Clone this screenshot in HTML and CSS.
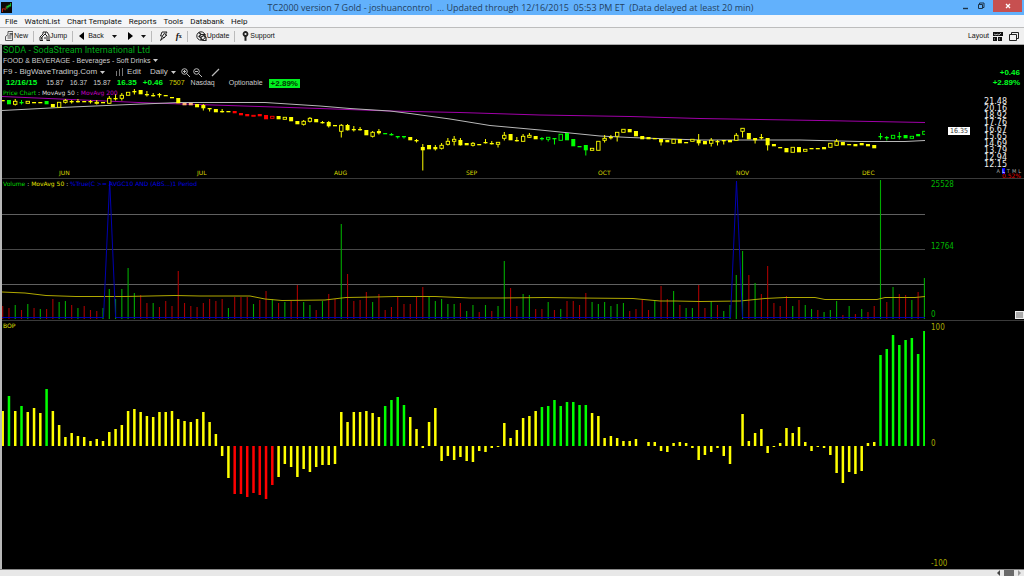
FILE: index.html
```html
<!DOCTYPE html>
<html lang="en">
<head>
<meta charset="utf-8">
<title>TC2000 version 7 Gold</title>
<link rel="stylesheet" href="styles.css">
</head>
<body>
<div class="app">
  <header class="titlebar">
    <svg class="logo" viewBox="0 0 12 12" aria-hidden="true"><rect width="12" height="12" fill="#0b0806"/><path d="M1 7h3v1H2v3H1zM4 7h1V5h1v2H5v2H4z" fill="#e02818"/><path d="M6 4h2V3h2V1h1v4H9v1H7v2H6z" fill="#18c030"/></svg>
    <h1 class="title">TC2000 version 7 Gold - joshuancontrol&nbsp; ... Updated through 12/16/2015&nbsp; 05:53 PM ET&nbsp; (Data delayed at least 20 min)</h1>
    <div class="window-buttons">
      <button class="win" aria-label="Minimize"><svg viewBox="0 0 8 8"><path d="M2 6.5h5" stroke="#1c3348" stroke-width="1.4"/></svg></button>
      <button class="win" aria-label="Restore"><svg viewBox="0 0 8 8" fill="none" stroke="#1c3348"><path d="M1.5 2.5h4v4h-4zM2.5 2V1H7v4.500H6"/></svg></button>
      <button class="win close" aria-label="Close"><svg viewBox="0 0 8 8"><path d="M2 2l4 4M6 2L2 6" stroke="#fff" stroke-width="1.3"/></svg></button>
    </div>
  </header>

  <nav class="menubar">
    <button>File</button><button>WatchList</button><button>Chart Template</button><button>Reports</button><button>Tools</button><button>Databank</button><button>Help</button>
  </nav>

  <div class="toolbar">
    <div class="group"><button><svg class="ico" viewBox="0 0 9 10" fill="none" stroke="#333" stroke-width=".8"><path d="M3 .5h5M3 .5v3L.5 5.500v4H7.500v-8M2.500 5h4M2.500 7h4M4.500 2.500h3M4.500 3.700h3"/></svg>New</button></div>
    <div class="group"><button><svg class="ico wide" viewBox="0 0 11 10" fill="none" stroke="#222"><path d="M1 9.500V6l3-3V1h4l2 3v5.500M3 9V6l3-3 2 2v4M5 7h2M1 9.500h3M7.500 9.500H11"/><path d="M2 7h1M6 2h1" stroke-width="1.500"/></svg>Jump</button></div>
    <div class="group nav">
      <button><svg class="tri" viewBox="0 0 5 8"><path d="M5 0L0 4l5 4z"/></svg>Back</button>
      <button aria-label="Back history"><svg class="caret" viewBox="0 0 5 3"><path d="M0 0h5L2.500 3z"/></svg></button>
      <button class="forward" aria-label="Forward"><svg class="tri" viewBox="0 0 5 8"><path d="M0 0l5 4-5 4z"/></svg></button>
      <button aria-label="Forward history"><svg class="caret" viewBox="0 0 5 3"><path d="M0 0h5L2.500 3z"/></svg></button>
    </div>
    <div class="group tools">
      <button aria-label="Alerts"><svg class="ico" viewBox="0 0 9 10" fill="none" stroke="#222"><path d="M3 1h5L6 4h2L1.500 9.500 3.500 5H1.500zM6 1.500L3.500 5M4 6.500h2"/></svg></button>
      <button class="fx" aria-label="Formula"><i>f</i><sub>x</sub></button>
    </div>
    <div class="group update"><button><svg class="ico wide" viewBox="0 0 11 10" fill="none" stroke="#222"><circle cx="5" cy="5" r="4.200"/><path d="M3 1.500l2 2-2 2 2 1.500v2M5.500 3.500h4M5 6l3-1.500 2 2v3H7L5 7.500z" stroke-width="1.200"/></svg>Update</button></div>
    <div class="group last"><button><svg class="help" viewBox="0 0 7 10" fill="none" stroke="#222"><circle cx="3.500" cy="3" r="2" stroke-width="1.800"/><path d="M3.500 4.500v5.300" stroke-width="2"/></svg>Support</button></div>
    <div class="layout">
      <button>Layout <svg class="grid-ico" viewBox="0 0 10 9"><path d="M0 0h10v4H0zM0 5h4v4H0zM5 5h4v4H5z" fill="#111"/><path d="M1 2l2 1 1-1 2 1 2-2M1 7h1M6 7h1" stroke="#ddd" stroke-width=".8" fill="none"/></svg></button>
      <button aria-label="Windows"><svg class="grid-ico" viewBox="0 0 10 9" fill="none" stroke="#222"><path d="M.5 2.500h7v6h-7zM2.500 2V.5h7v6H8"/></svg></button>
    </div>
  </div>

  <main class="charts">
    <section class="pane price" aria-label="Price chart">
      <div class="plot">
        <svg id="price" viewBox="0 0 923 133" preserveAspectRatio="none"></svg>
        <div class="info">
          <h2 class="symbol">SODA - SodaStream International Ltd</h2>
          <button class="row industry">FOOD &amp; BEVERAGE - Beverages - Soft Drinks <svg class="caret" viewBox="0 0 5 3"><path d="M0 0h5L2.500 3z"/></svg></button>
          <div class="row controls">
            <button>F9 - BigWaveTrading.Com <svg class="caret" viewBox="0 0 5 3"><path d="M0 0h5L2.500 3z"/></svg></button>
            <button class="edit"><svg class="bars" viewBox="0 0 9 8" stroke="#777"><path d="M1.500 3v5M4.500 1v7M7.500 0v8"/></svg>Edit</button>
            <button class="daily">Daily <svg class="caret" viewBox="0 0 5 3"><path d="M0 0h5L2.500 3z"/></svg></button>
            <button aria-label="Zoom in"><svg class="lens" viewBox="0 0 9 9" fill="none" stroke="#bbb"><circle cx="3.500" cy="3.500" r="2.800"/><path d="M5.500 5.500L9 9M2 3.500h3M3.500 2v3"/></svg></button>
            <button aria-label="Zoom out"><svg class="lens" viewBox="0 0 9 9" fill="none" stroke="#bbb"><circle cx="3.500" cy="3.500" r="2.800"/><path d="M5.500 5.500L9 9M2 3.500h3"/></svg></button>
            <button class="draw" aria-label="Draw line"><svg class="lens" viewBox="0 0 9 9" stroke="#bbb"><path d="M1 8L8 1" stroke-width="1.300"/></svg></button>
          </div>
          <div class="row quote">
            <b class="date">12/16/15</b><span>15.87</span><span>16.37</span><span>15.87</span><b>16.35</b><b>+0.46</b><span class="vol">7507</span><span class="exchange">Nasdaq</span><span class="opt">Optionable</span><b class="badge">+2.89%</b>
          </div>
          <div class="legend"><span class="g">Price Chart</span> : MovAvg 50 : <span class="m">MovAvg 200</span></div>
        </div>
        <div class="months"><span>JUN</span><span>JUL</span><span>AUG</span><span>SEP</span><span>OCT</span><span>NOV</span><span>DEC</span></div>
      </div>
      <div class="scale price-scale">
        <div class="change"><b>+0.46</b><b>+2.89%</b></div>
        <div class="ticks"><span>21.48</span><span>20.16</span><span>18.92</span><span>17.76</span><span>16.67</span><span>15.65</span><span>14.69</span><span>13.79</span><span>12.94</span><span>12.15</span></div>
        <div class="modes"><span>A</span><span class="on">L</span><span>T</span><span>M</span><span>L</span></div>
        <div class="pct">0.52%</div>
        <span class="last-price">16.35</span>
      </div>
    </section>

    <section class="pane volume" aria-label="Volume">
      <div class="plot">
        <svg id="volume" viewBox="0 0 923 141" preserveAspectRatio="none"></svg>
        <div class="legend"><span class="g">Volume</span> : <span class="y">MovAvg 50</span> : <span class="b">%True(C &gt;= AVGC10 AND (ABS...)1 Period</span></div>
      </div>
      <div class="scale vol-scale"><span>25528</span><span>12764</span><span>0</span></div>
      <button class="handle" aria-label="Resize pane"></button>
    </section>

    <section class="pane bop" aria-label="Balance of power">
      <div class="plot">
        <svg id="bop" viewBox="0 0 923 248" preserveAspectRatio="none"></svg>
        <div class="legend"><span class="y">BOP</span></div>
      </div>
      <div class="scale bop-scale"><span>100</span><span>0</span><span>-100</span></div>
    </section>
  </main>

  <footer class="scrollbar">
    <button aria-label="Scroll left"><svg viewBox="0 0 10 6"><path d="M6 0L3 3l3 3z" fill="#444"/></svg></button>
    <div class="thumb"></div>
    <button aria-label="Scroll right"><svg viewBox="0 0 10 6"><path d="M4 0l3 3-3 3z" fill="#999"/></svg></button>
  </footer>
</div>
<script src="chart.js"></script>
</body>
</html>
```
FILE: styles.css
```css
* { box-sizing: border-box; }
body { margin: 0; background: #000; }
button { font: inherit; color: inherit; background: none; border: 0; padding: 0; display: flex; align-items: center; white-space: nowrap; }
h1, h2 { margin: 0; font-weight: normal; }
svg { display: block; flex: none; }

.app { display: flex; flex-direction: column; height: 100vh; font: 8px/10px Roboto, "Open Sans", sans-serif; color: #111; }

.titlebar { display: flex; align-items: center; flex: none; height: 15px; background: #62b1fc; }
.logo { width: 11px; height: 11px; margin-left: 1px; }
.title { flex: 1; padding-left: 52px; font: 9px/15px "Open Sans", "Noto Sans", sans-serif; text-align: center; color: #24415f; white-space: nowrap; }
.window-buttons { display: flex; align-self: flex-start; align-items: center; padding-right: 2px; }
.win { justify-content: center; width: 16px; height: 12px; }
.win svg { width: 8px; height: 8px; }
.win.close { width: 29px; margin-left: 4px; background: #c75050; }

.menubar { display: flex; align-items: center; gap: 7px; flex: none; height: 13px; padding: 1px 0 0 5px; background: #f5f6f8; border-bottom: 1px solid #bdbdbd; }

.toolbar { display: flex; align-items: center; flex: none; height: 17px; padding: 0 5px; background: #f0f0f0; border-bottom: 1px solid #aaa; font: 7px/10px "Liberation Sans", Arial, sans-serif; }
.group { display: flex; align-items: center; height: 11px; padding-right: 5px; margin-right: 5px; border-right: 1px solid #bbb; }
.group.last { border: 0; padding-left: 2px; }
.group.update { padding-left: 3px; }
.ico { width: 9px; height: 10px; }
.ico.wide { width: 11px; }
.help { width: 7px; height: 10px; margin-right: 1px; }
.tri { width: 5px; height: 8px; margin-right: 4px; }
.forward .tri { margin-right: 0; }
.caret { width: 5px; height: 3px; fill: currentColor; }
.group.nav { gap: 8px; padding-left: 1px; }
.group.nav .forward { padding-left: 3px; }
.group.tools { gap: 8px; padding-left: 2px; }
.fx { font: bold 9px/10px "Liberation Serif", serif; }
.fx sub { font-size: 6px; line-height: 6px; }
.layout { display: flex; gap: 6px; margin-left: auto; }
.layout button { gap: 4px; }
.grid-ico { width: 10px; height: 9px; }

.charts { flex: 1; min-height: 0; display: grid; grid-template-rows: 134fr 142fr 248fr; background: #000; border-left: 2px solid #b8b8b8; font: 8px/10px "DejaVu Sans Condensed", "DejaVu Sans", sans-serif; }
.pane { position: relative; display: grid; grid-template-columns: 923fr 99fr; min-height: 0; border-bottom: 1px solid #3a3a3a; }
.pane.bop { border: 0; }
.plot { display: grid; grid-template: minmax(0, 1fr) / minmax(0, 1fr); min-height: 0; }
.plot > * { grid-area: 1 / 1; }
.plot > svg { width: 100%; height: 100%; }
.legend { font: 6px/10px "DejaVu Sans", sans-serif; color: #ddd; white-space: nowrap; padding-left: 1px; }
.g { color: #00d800; }
.m { color: #c000c0; }
.y { color: #e0e000; }
.b { color: #0000e0; }

.info { font: 8px/10px "Liberation Sans", Arial, sans-serif; color: #ccc; padding-left: 1px; }
.info .legend { padding-left: 0; }
.symbol { font: 9px/10px Roboto, sans-serif; color: #00a818; }
.row { display: flex; align-items: center; gap: 3px; }
.industry { font-size: 7px; line-height: 11px; }
.controls { line-height: 12px; }
.controls button { gap: 3px; }
.edit { padding-left: 7px; }
.daily { padding: 0 2px 0 6px; }
.bars { width: 9px; height: 8px; }
.lens { width: 9px; height: 9px; }
.draw { padding-left: 6px; }
.quote { gap: 6px; padding-left: 3px; line-height: 10px; }
.quote span { font-size: 7px; }
.quote b { color: #00ff20; }
.quote .date { padding-right: 3px; }
.quote .vol { color: #d0d000; }
.exchange { margin-right: 8px; }
.quote .badge { padding: 0 2px; color: #003800; background: #00f020; line-height: 9px; }

.months { align-self: end; display: grid; grid-template-columns: 138fr 137fr 132fr 132fr 138fr 126fr 63fr; padding-left: 57px; font: 6px/8px "DejaVu Sans", sans-serif; color: #d8d800; padding-bottom: 1px; }

.scale { display: grid; padding-left: 6px; min-height: 0; }
.price-scale { grid-template-rows: 1fr auto 6px 4px; padding-right: 3px; }
.change { display: flex; flex-direction: column; align-items: flex-end; padding-top: 23px; padding-right: 1px; color: #00ff20; font: 8px/10px "Liberation Sans", Arial, sans-serif; }
.ticks { display: grid; grid-auto-rows: 7px; justify-content: end; padding-right: 14px; color: #eee; font: 8px/7px "DejaVu Sans", sans-serif; }
.modes { display: flex; justify-content: flex-end; gap: 2px; font: 5px/6px "DejaVu Sans", sans-serif; color: #aaa; }
.modes .on { background: #0000ff; color: #fff; }
.pct { text-align: right; color: #e00000; font: 6px/4px "DejaVu Sans", sans-serif; }
.last-price { position: absolute; right: 54px; top: 82px; padding: 0 2px; background: #fff; color: #333; font: 7px/8px "DejaVu Sans Condensed", sans-serif; }
.vol-scale { grid-template-rows: 62fr 68fr auto; padding-top: 1px; color: #00b400; }
.bop-scale { grid-template-rows: 116fr 121fr auto; padding-top: 2px; color: #a8a800; }
.handle { position: absolute; right: 0; bottom: 1px; width: 9px; height: 8px; background: #aaa; border: 1px solid #eee; }

.scrollbar { display: flex; justify-content: flex-end; flex: none; height: 7px; background: #e8e8e8; border-top: 1px solid #888; }
.scrollbar svg { width: 10px; height: 6px; }
.thumb { width: 10px; background: #6a6a6a; }
```
FILE: chart.js
```js
const NS = 'http://www.w3.org/2000/svg';
const STEP = 6.27;
const xAt = i => 0.7 + i * STEP;
const COLORS = { y: '#ffff00', g: '#00ff00', r: '#ff0000', p: '#ffb070' };

function add(svg, name, attrs) {
  const el = document.createElementNS(NS, name);
  for (const key in attrs) el.setAttribute(key, attrs[key]);
  svg.appendChild(el);
}
function bar(svg, x, w, y1, y2, fill) {
  add(svg, 'rect', { x: x - w / 2, y: Math.min(y1, y2), width: w, height: Math.abs(y2 - y1), fill });
}
function line(svg, points, stroke, width = 1) {
  add(svg, 'polyline', { points, stroke, 'stroke-width': width, fill: 'none' });
}

/* Candles: colour, kind (f filled, h hollow), body top, body bottom, high, low */
const candles = `yf 55 56;gf 55 59;yh 56 59 54 60;gf 57 58 55 59;yh 56 58;yf 57 58;yf 57 58;gf 56 59;yf 59 62;yh 57 62;yh 55 57 54 58;yf 56 57 55 58;yf 56 57 54 57;yf 56 57;yf 56 57 55 58;yh 57 58 55 59;yf 57 58;yh 53 58 51 58;yf 53 54 49 55;yh 50 53 48 55;yh 47 50;yf 46 47 44 49;yf 45 49;yf 49 50 46 51;yf 50 51 48 51;yf 49 50 48 52;yf 50 51;yf 52 53;yf 53 58;pf 58 60;pf 58 60;yf 59 62;yf 60 63 59 65;yf 63 64 63 66;yf 64 67;yf 66 67 64 67;yf 66 67;rf 66 68;rf 68 70;rf 69 71;rh 70 71;rf 69 71;rf 70 74;rh 71 73;yf 71 74;yh 72 74;yf 72 76;yf 76 79;yh 76 79 75 80;yh 73 76 72 77;yf 74 77;yf 77 78 76 78;yf 77 81 76 82;yf 80 81;yh 80 86 79 92;yf 80 85 79 85;yf 84 85 81 86;yf 84 85 82 85;yf 85 90;yh 87 91 86 92;yf 86 88 84 89;gf 88 89;gf 89 90 88 90;gf 91 92 91 93;gf 91 92 91 93;yf 92 95;yf 95 96 94 97;yf 102 105 99 125;yf 100 104;yf 102 104 100 105;yh 100 103 98 104;yh 96 99 93 100;yh 94 96 91 100;yf 95 100 93 100;yf 98 100;yh 98 100 97 101;yf 99 100;yf 97 98 94 98;yf 98 99 96 99;yh 97 99 97 102;yh 90 93 87 95;yf 89 95;yf 95 96 92 96;yh 91 96 89 96;yh 90 92 88 92;yf 91 94;gf 93 94 92 95;gh 92 94 92 96;gf 93 94 93 99;gh 89 95;gf 88 95;gf 94 101;gf 101 102;gf 100 105 100 110;yh 103 105;yh 96 105;yh 93 95 90 97;yf 92 93 90 94;yh 87 91 87 96;yh 84 87;yf 84 87;yf 86 91;yf 91 94;yf 92 94;yf 93 94;yf 94 97 94 100;yf 95 97;yh 94 98;yf 94 98;yf 97 98;yh 94 96;yf 95 98 89 100;yf 96 99;yh 95 98 93 101;yf 96 97 95 100;yf 95 96 95 99;yf 95 97;yh 90 95 88 95;yh 83 86 83 92;yf 88 94;yf 93 95 93 98;yf 92 93 89 94;yf 93 100 93 105;yf 99 101;yf 102 103;yf 103 107;yh 102 107;yf 102 107;yh 104 106;yf 103 104;yf 103 104;yf 102 104;yh 98 102;yh 96 100 94 100;yf 97 100;yf 99 100;yf 99 101;yf 98 100;yf 99 101;yf 100 103;gf 91 92 88 94;gf 92 93 91 95;gh 90 93;gf 91 92 87 94;gf 90 93;gh 91 93;gf 89 91;gh 86 89`.split(';');

const price = document.getElementById('price');
line(price, '0,51.500 58,54 148,58 165,58.500 318,63.500 388,66 458,67.500 538,70 628,71.500 698,73.500 818,75.500 923,77.500', '#a000a8');
line(price, '0,65.500 58,62.500 128,59.500 178,57.500 263,57.500 318,61 348,63.500 388,66 408,68.500 448,74 488,80.500 538,85 598,91 628,92.500 698,95 798,95 858,96.500 903,96.500 923,95.500', '#b8b8b8');
candles.forEach((text, i) => {
  const [kind, top, bottom, high, low] = text.split(' ');
  const x = xAt(i), color = COLORS[kind[0]];
  if (high) bar(price, x, 1, +high, +low + 0.5, color);
  if (kind[1] === 'f') bar(price, x, 4, +top, +bottom + 0.3, color);
  else add(price, 'rect', { x: x - 1.7, y: +top + 0.3, width: 3.4, height: bottom - top, fill: '#000', stroke: color, 'stroke-width': 0.9 });
});

/* Volume: colour and bar height */
const volumes = 'r13 r11 g14 r9 g15 r11 g10 r10 r20 g17 g18 r14 g11 r13 r9 r8 g11 g30 g20 g30 g51 g26 r24 r16 g16 r12 r18 r13 r48 r16 r13 r12 r16 r20 r18 r20 g11 r22 r22 r22 g15 r19 r28 g20 r16 g17 r18 r34 g17 g14 r9 g18 r25 r20 g95 r45 r18 r19 r27 g17 r25 r9 r12 r22 r15 r15 r22 r32 g22 g18 g20 g15 g15 r16 g8 g14 r7 g14 r8 g13 g58 r31 r13 g25 g24 r10 r10 g17 r9 g10 r18 r18 r14 r26 g17 g15 g17 g13 g15 g16 r8 r10 r20 r9 g19 r33 r20 g28 r14 g11 g11 r34 r11 g18 r14 g8 g14 g44 g68 r44 g36 r25 r53 r16 r13 r23 g13 r19 g14 g10 r9 g7 g9 g18 r4 g13 r5 g10 r7 r13 g139 r17 g32 r25 r24 g19 r27 g41'.split(' ');
const volume = document.getElementById('volume');
[35.5, 70.5, 105.5].forEach((y, i) => line(volume, `0,${y} 923,${y}`, i === 1 ? '#484848' : '#606060'));
volumes.forEach((v, i) => bar(volume, xAt(i), 1.1, 140, 140 - v.slice(1), v[0] === 'g' ? '#00aa00' : '#a80000'));
line(volume, '0,113 23,114 44,116.500 74,117.500 123,117.500 173,116.500 198,117 248,117 263,120 280,121.500 323,121 344,118.500 373,118 393,117.500 433,117.500 468,119 498,119 543,118.500 578,119 631,119.500 658,122 673,122 698,122.500 738,122 763,119.500 783,118.500 813,118.500 823,120.500 875,120.500 883,118.500 913,118.500 923,117.500', '#b0a800');
line(volume, '0,138.500 101.500,138.500 107.700,2 113.600,138.500 728.500,138.500 734.500,2 740.500,138.500 923,138.500', '#0000b0');

/* Balance of power: colour and signed bar height */
const powers = 'y35 g50 y35 g40 y34 y38 y33 g57 y35 y21 y9 y13 y10 y9 y5 y7 y5 y14 y17 y21 y35 y37 y34 y30 y29 y34 y34 y35 y27 y25 y24 y27 y34 y24 y12 y-10 y-32 r-48 r-48 r-51 r-47 r-49 r-53 r-39 y-31 y-18 y-21 y-31 y-23 y-26 y-21 y-19 y-19 y-18 y34 y24 y34 y34 y35 y33 y29 g40 g46 g49 g41 y29 y17 y-2 y24 y38 y-15 y-10 y-14 y-11 y-15 y-16 y-5 y-6 y-2 y-1 y23 y8 y16 y28 y30 y35 g39 g40 g46 g40 g44 g44 g41 g41 y33 y30 y8 y10 y8 y5 y5 y7 y0 y4 y4 y-5 y-6 y3 y4 y3 y-2 y-14 y-9 y-6 y-2 y-10 y-18 y0 y32 y5 y13 y17 y-7 y-1 y3 y18 y13 y19 y4 y-5 y-1 y-2 y-9 y-27 y-37 y-26 y-28 y-25 y3 y4 g91 g97 g111 g101 g106 g108 g92 g115'.split(' ');
const bop = document.getElementById('bop');
powers.forEach((v, i) => bar(bop, xAt(i), 2.5, 125, 125 - v.slice(1), COLORS[v[0]]));
```
